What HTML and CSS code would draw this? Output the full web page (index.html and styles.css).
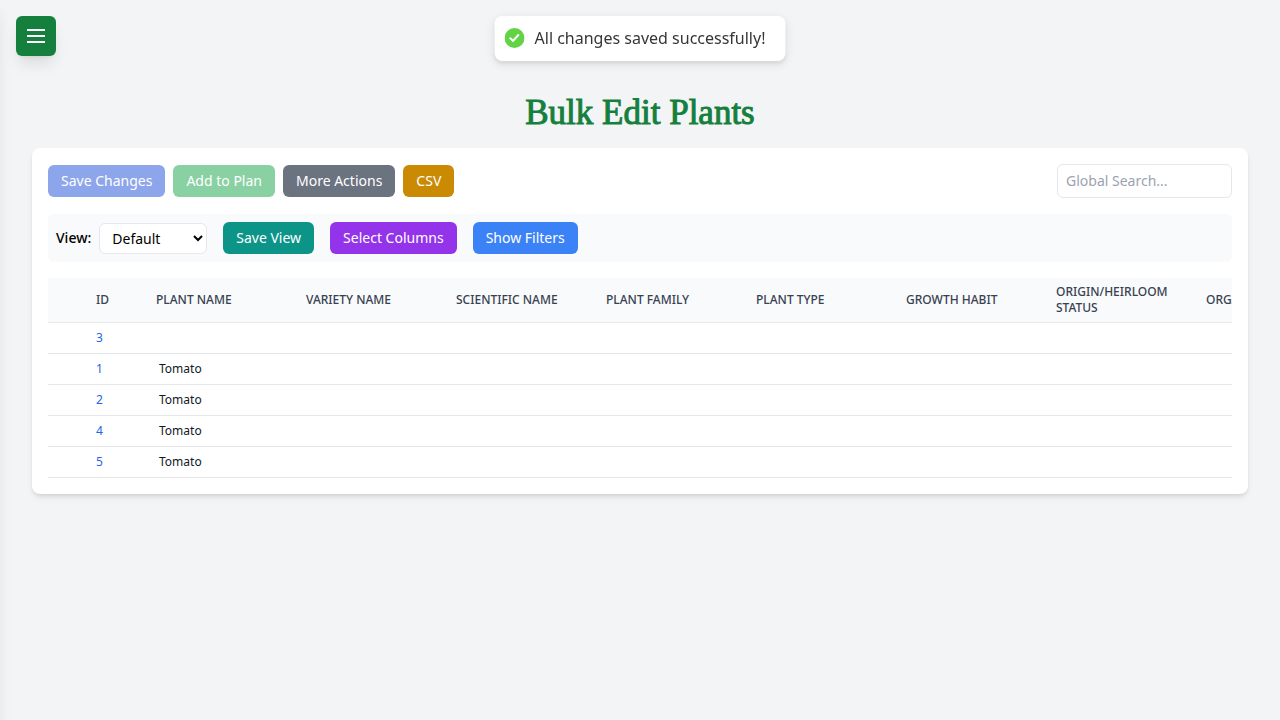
FILE: index.html
```html
<!DOCTYPE html>
<html lang="en">
<head>
<meta charset="utf-8">
<meta name="viewport" content="width=device-width, initial-scale=1">
<title>Bulk Edit Plants</title>
<link rel="stylesheet" href="styles.css">
</head>
<body>
<div class="sidebar" aria-hidden="true"></div>
<button class="menu-button" type="button" aria-label="Open menu">
  <svg class="menu-icon" viewBox="0 0 24 24" fill="none" stroke="currentColor" stroke-width="2" aria-hidden="true"><path d="M3 6h18M3 12h18M3 18h18"/></svg>
</button>
<div class="toast" role="status">
  <svg class="toast-icon" viewBox="0 0 20 20" aria-hidden="true"><circle cx="10" cy="10" r="10" fill="#61d345"/><path d="M5.7 10.3l2.8 2.5 5.3-5.8" fill="none" stroke="#fff" stroke-width="2" stroke-linecap="round"/></svg>
  <span class="toast-text">All changes saved successfully!</span>
</div>
<main class="page">
  <h1 class="title">Bulk Edit Plants</h1>
  <section class="card">
    <div class="toolbar">
      <div class="actions">
        <button class="button blue" type="button" disabled>Save Changes</button>
        <button class="button green" type="button" disabled>Add to Plan</button>
        <button class="button gray" type="button">More Actions</button>
        <button class="button yellow" type="button">CSV</button>
      </div>
      <input class="search" type="text" placeholder="Global Search..." aria-label="Global search">
    </div>
    <div class="view-bar">
      <div class="view-field">
        <label class="view-label" for="view">View:</label>
        <select class="view-select" id="view"><option>Default</option></select>
      </div>
      <button class="button teal" type="button">Save View</button>
      <button class="button purple" type="button">Select Columns</button>
      <button class="button sky" type="button">Show Filters</button>
    </div>
    <div class="table-wrap">
      <table class="plants">
        <colgroup><col class="col-check"><col class="col-id"><col span="8" class="col-data"></colgroup>
        <thead>
          <tr><th></th><th>ID</th><th>Plant Name</th><th>Variety Name</th><th>Scientific Name</th><th>Plant Family</th><th>Plant Type</th><th>Growth Habit</th><th>Origin/Heirloom Status</th><th>Organic</th></tr>
        </thead>
        <tbody>
          <tr><td></td><td><a class="id-link" href="#3">3</a></td><td></td><td></td><td></td><td></td><td></td><td></td><td></td><td></td></tr>
          <tr><td></td><td><a class="id-link" href="#1">1</a></td><td><span class="value">Tomato</span></td><td></td><td></td><td></td><td></td><td></td><td></td><td></td></tr>
          <tr><td></td><td><a class="id-link" href="#2">2</a></td><td><span class="value">Tomato</span></td><td></td><td></td><td></td><td></td><td></td><td></td><td></td></tr>
          <tr><td></td><td><a class="id-link" href="#4">4</a></td><td><span class="value">Tomato</span></td><td></td><td></td><td></td><td></td><td></td><td></td><td></td></tr>
          <tr><td></td><td><a class="id-link" href="#5">5</a></td><td><span class="value">Tomato</span></td><td></td><td></td><td></td><td></td><td></td><td></td><td></td></tr>
        </tbody>
      </table>
    </div>
  </section>
</main>
</body>
</html>
```
FILE: styles.css
```css
* { box-sizing: border-box; }

body {
  margin: 0;
  min-height: 100vh;
  background: #f3f4f6;
  color: #000;
  font-family: "Noto Sans", "Open Sans", sans-serif;
  font-size: 16px;
  line-height: 24px;
}

button, input, select { font: inherit; }

/* Closed drawer: only its shadow reaches the page. */
.sidebar {
  position: fixed;
  top: 0;
  bottom: 0;
  right: 100%;
  width: 256px;
  background: #fff;
  box-shadow: 0 10px 15px -3px rgba(0, 0, 0, 0.1), 0 4px 6px -4px rgba(0, 0, 0, 0.1);
}

.menu-button {
  position: fixed;
  top: 16px;
  left: 16px;
  display: flex;
  padding: 8px;
  border: 0;
  border-radius: 6px;
  background: #15803d;
  color: #fff;
  box-shadow: 0 10px 15px -3px rgba(0, 0, 0, 0.1), 0 4px 6px -4px rgba(0, 0, 0, 0.1);
}

.menu-icon { width: 24px; height: 24px; }

.toast-layer, .toast {
  position: fixed;
  top: 16px;
  left: 50%;
  transform: translateX(-50%);
}

.toast {
  display: flex;
  align-items: flex-start;
  gap: 10px;
  padding: 8px 20px 8px 10px;
  border-radius: 8px;
  background: #fff;
  color: #363636;
  white-space: nowrap;
  box-shadow: 0 3px 10px rgba(0, 0, 0, 0.1), 0 3px 3px rgba(0, 0, 0, 0.05);
}

.toast-icon { width: 20px; height: 20px; margin-top: 4px; }
.toast-text { line-height: 29px; }

.page { padding: 92px 32px 32px; }

.title {
  margin: 0 0 14px;
  color: #15803d;
  font-family: "Liberation Serif", serif;
  font-size: 35px;
  font-weight: 400;
  line-height: 42px;
  text-align: center;
  -webkit-text-stroke: 1px currentColor;
}

.card {
  padding: 16px;
  border-radius: 8px;
  background: #fff;
  box-shadow: 0 4px 6px -1px rgba(0, 0, 0, 0.1), 0 2px 4px -2px rgba(0, 0, 0, 0.1);
}

.toolbar {
  display: flex;
  flex-wrap: wrap;
  align-items: center;
  justify-content: space-between;
  gap: 16px;
  margin-bottom: 16px;
}

.actions { display: flex; flex-wrap: wrap; gap: 8px; }

.button {
  padding: 6px 13px;
  border: 0;
  border-radius: 6px;
  color: #fff;
  font-size: 14px;
  line-height: 20px;
}

.button:disabled { opacity: 0.5; }

.blue { background: #1d4ed8; }
.green { background: #16a34a; }
.gray { background: #6b7280; }
.yellow { background: #ca8a04; }
.teal { background: #0d9488; }
.purple { background: #9333ea; }
.sky { background: #3b82f6; }

.search {
  width: 175px;
  padding: 6px 8px;
  border: 1px solid #e5e7eb;
  border-radius: 6px;
  background: #fff;
  font-size: 14px;
  line-height: 20px;
}

.search::placeholder { color: #9ca3af; opacity: 1; }

.view-bar {
  display: flex;
  flex-wrap: wrap;
  align-items: center;
  gap: 16px;
  margin-bottom: 16px;
  padding: 8px;
  border-radius: 6px;
  background: #f9fafb;
  font-size: 14px;
  line-height: 20px;
}

.view-field { display: flex; align-items: center; gap: 8px; }
.view-label { font-weight: 500; }

.view-select {
  width: 108px;
  height: 31px;
  padding: 4px 0 4px 8px;
  border: 1px solid #e5e7eb;
  border-radius: 6px;
  background: #fff;
  color: #000;
}

.table-wrap { overflow-x: auto; scrollbar-width: none; }

.plants {
  width: 1300px;
  table-layout: fixed;
  border-collapse: collapse;
  font-size: 12px;
  line-height: 16px;
  text-align: left;
}

.col-check { width: 40px; }
.col-id { width: 60px; }
.col-data { width: 150px; }

.plants th {
  height: 44px;
  padding: 6px 8px;
  background: #f9fafb;
  color: #374151;
  font-weight: 500;
  text-transform: uppercase;
}

.plants tr { border-bottom: 1px solid #e5e7eb; }
.plants td { height: 31px; padding: 4px 8px; color: #111827; }

.id-link { color: #2563eb; text-decoration: none; }
.value { display: block; padding: 0 3px; }
```
